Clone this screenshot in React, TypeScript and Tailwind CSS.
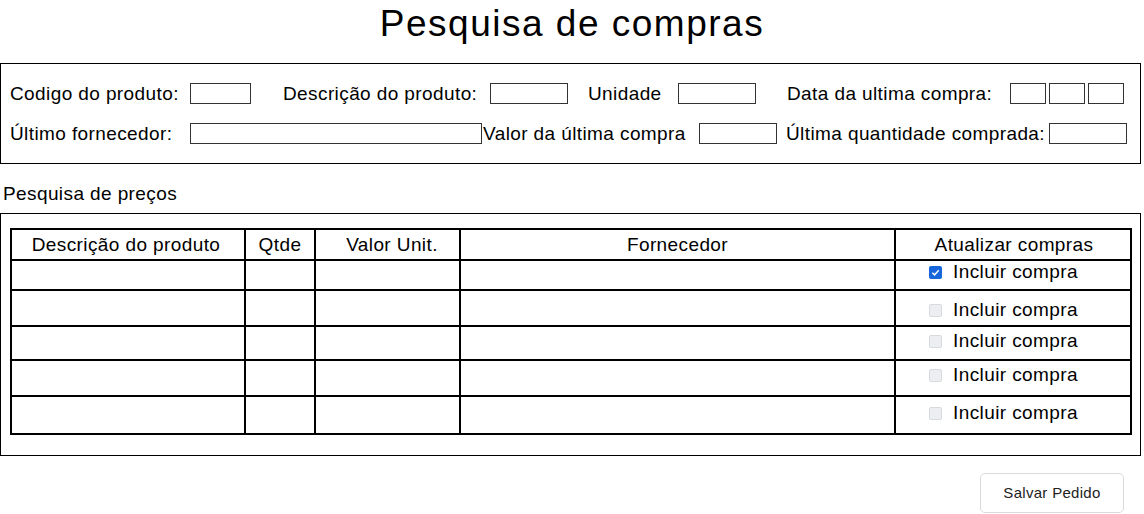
import React from "react";

const font = { fontFamily: '"Liberation Sans", Arial, sans-serif' };

function Input({ w }: { w: string }) {
  return <input type="text" className={`${w} h-[21px] border border-[#333] bg-white outline-none`} />;
}

function Check({ checked }: { checked?: boolean }) {
  if (checked) {
    return (
      <span className="w-[13px] h-[13px] rounded-[2px] bg-[#1766dc] flex items-center justify-center shrink-0">
        <svg width="9" height="9" viewBox="0 0 10 10">
          <path d="M1.5 5.2 L4 7.6 L8.6 2.4" stroke="white" strokeWidth="1.6" fill="none" />
        </svg>
      </span>
    );
  }
  return <span className="w-[13px] h-[13px] rounded-[2px] bg-[#eceef1] border border-[#d6d9de] shrink-0" />;
}

const rows = [
  { pt: "pt-[0px]", checked: true },
  { pt: "pt-[8px]", checked: false },
  { pt: "pt-[3px]", checked: false },
  { pt: "pt-[3px]", checked: false },
  { pt: "pt-[5px]", checked: false },
];

export default function App() {
  return (
    <div className="w-[1144px] bg-white text-black text-[19px] tracking-[0.4px]" style={font}>
      <div className="h-[48px] leading-[48px] text-center text-[37px] tracking-[1.5px]">Pesquisa de compras</div>

      <div className="mt-[15px] w-[1141px] h-[101px] border border-black pt-[19px] pl-[9px] flex flex-col gap-[19px]">
        <div className="flex items-center h-[21px] leading-[22px] whitespace-nowrap">
          <span className="w-[180px]">Codigo do produto:</span>
          <Input w="w-[61px]" />
          <span className="ml-[32px] w-[207px]">Descrição do produto:</span>
          <Input w="w-[78px]" />
          <span className="ml-[20px] w-[90px]">Unidade</span>
          <Input w="w-[78px]" />
          <span className="ml-[31px] w-[223px]">Data da ultima compra:</span>
          <div className="flex gap-[3px]">
            <Input w="w-[36px]" />
            <Input w="w-[36px]" />
            <Input w="w-[36px]" />
          </div>
        </div>
        <div className="flex items-center h-[21px] leading-[22px] whitespace-nowrap">
          <span className="w-[180px]">Último fornecedor:</span>
          <Input w="w-[292px]" />
          <span className="ml-[1px] w-[216px]">Valor da última compra</span>
          <Input w="w-[78px]" />
          <span className="ml-[9px] w-[263px]">Última quantidade comprada:</span>
          <Input w="w-[78px]" />
        </div>
      </div>

      <div className="h-[49px] pt-[19px] pl-[3px] leading-[22px]">Pesquisa de preços</div>

      <div className="w-[1141px] h-[243px] border border-black pt-[14px] pl-[9px]">
        <div className="w-[1122px] grid grid-cols-[234px_70px_145px_435px_236px] grid-rows-[31px_30px_36px_34px_36px_38px] border-l-2 border-t-2 border-black leading-[22px]">
          <div className="border-r-2 border-b-2 border-black flex items-center justify-center pr-[4px]">Descrição do produto</div>
          <div className="border-r-2 border-b-2 border-black flex items-center justify-center">Qtde</div>
          <div className="border-r-2 border-b-2 border-black flex items-center justify-center pl-[9px]">Valor Unit.</div>
          <div className="border-r-2 border-b-2 border-black flex items-center justify-center">Fornecedor</div>
          <div className="border-r-2 border-b-2 border-black flex items-center justify-center pl-[2px]">Atualizar compras</div>
          {rows.map((r, i) => (
            <React.Fragment key={i}>
              <div className="border-r-2 border-b-2 border-black" />
              <div className="border-r-2 border-b-2 border-black" />
              <div className="border-r-2 border-b-2 border-black" />
              <div className="border-r-2 border-b-2 border-black" />
              <div className={`border-r-2 border-b-2 border-black ${r.pt} pl-[33px]`}>
                <div className="flex items-center gap-[11px] h-[22px] whitespace-nowrap">
                  <Check checked={r.checked} />
                  <span>Incluir compra</span>
                </div>
              </div>
            </React.Fragment>
          ))}
        </div>
      </div>

      <div className="flex justify-end pr-[20px] pt-[17px]">
        <button className="w-[144px] h-[40px] border border-[#dadada] rounded-[5px] bg-white text-[15px] tracking-[0.3px] text-[#222]">
          Salvar Pedido
        </button>
      </div>
    </div>
  );
}
